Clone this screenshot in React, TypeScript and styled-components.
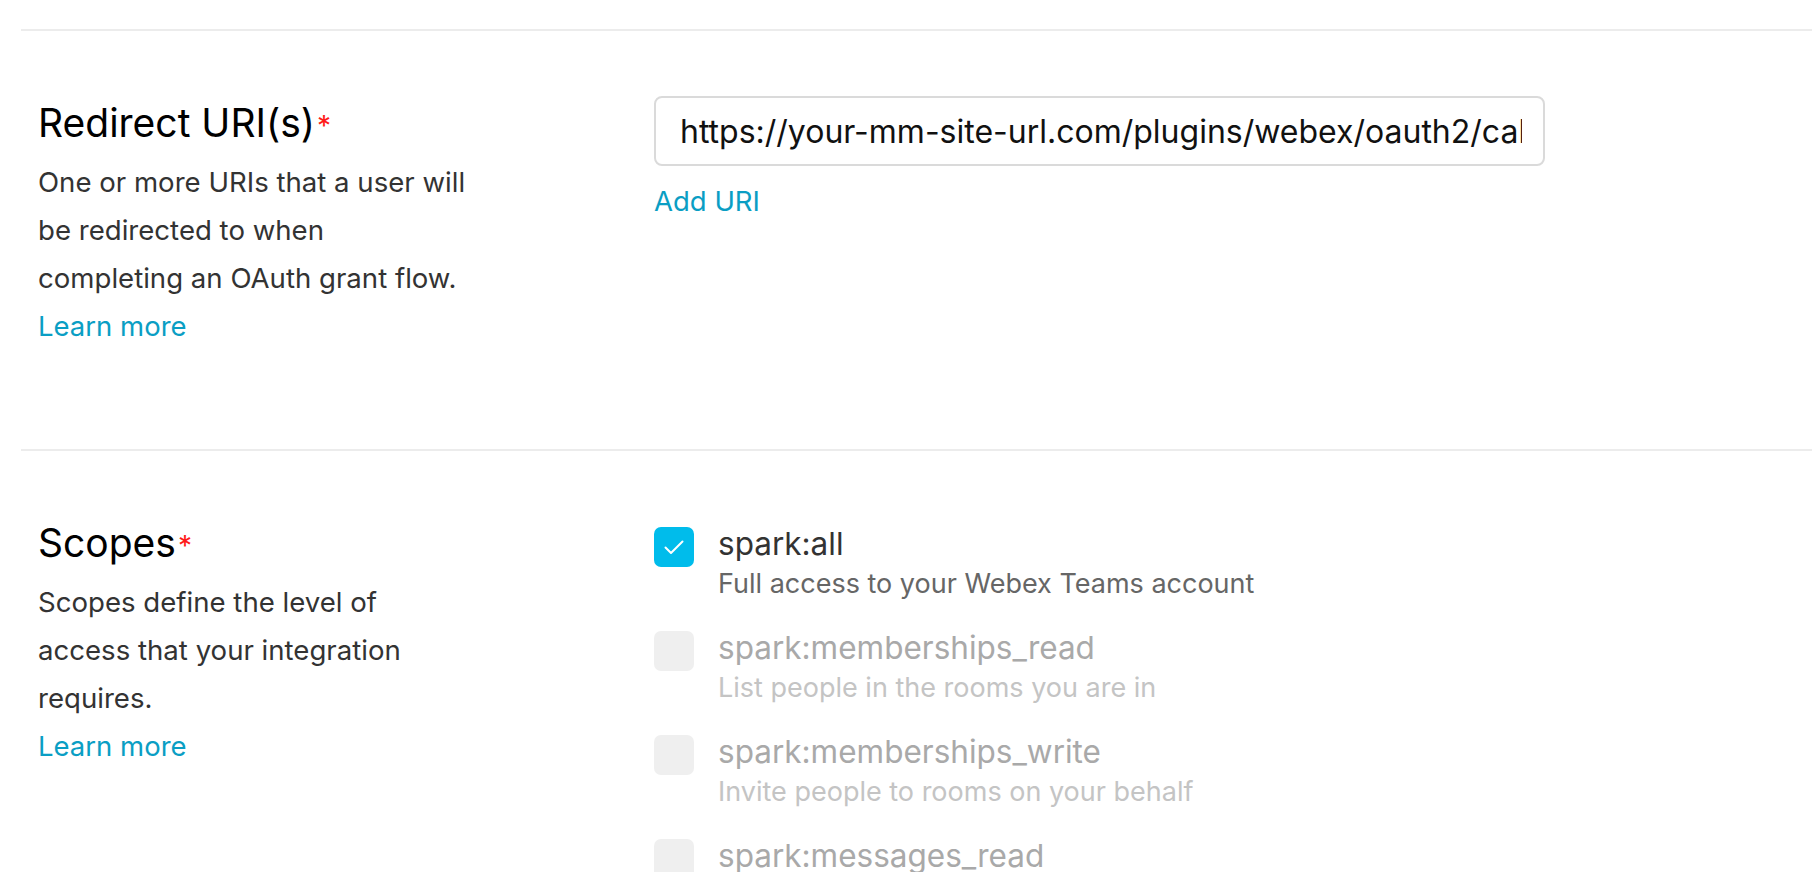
import React from "react";
import styled, { createGlobalStyle } from "styled-components";

const GlobalStyle = createGlobalStyle`
  html, body {
    margin: 0;
    padding: 0;
    background: #ffffff;
    overflow: hidden;
  }
  body {
    font-family: Inter, "Liberation Sans", Arial, sans-serif;
    -webkit-font-smoothing: antialiased;
  }
`;

const Page = styled.main`
  padding: 29px 0 0 21px;
`;

const Section = styled.section`
  border-top: 2px solid #ececec;
  display: grid;
  grid-template-columns: 616px 891px;
  align-items: start;
  padding: 65px 0 99px 17px;
`;

const LeftCol = styled.div`
  padding-top: 3px;
`;

const RightCol = styled.div<{ $offset: number }>`
  padding-top: ${(p) => p.$offset}px;
`;

const Title = styled.h2`
  margin: 0 0 11px;
  font-size: 39px;
  line-height: 48px;
  height: 48px;
  font-weight: 400;
  color: #000000;
`;

const Required = styled.span`
  position: relative;
  top: -1px;
  margin-left: 2px;
  font-size: 28px;
  line-height: 0;
  vertical-align: baseline;
  color: #ff1a1a;
`;

const Desc = styled.p`
  margin: 0;
  font-size: 27.6px;
  line-height: 48px;
  color: #333333;
  white-space: pre-line;
`;

const Link = styled.a`
  display: block;
  font-size: 27.5px;
  line-height: 48px;
  color: #0a9ec4;
  text-decoration: none;
  cursor: pointer;
`;

const AddLink = styled(Link)`
  margin-top: 11px;
`;

const UriInput = styled.input`
  box-sizing: border-box;
  width: 891px;
  height: 70px;
  border: 2px solid #dadada;
  border-radius: 8px;
  padding: 0 21px 0 24px;
  font-family: Inter, "Liberation Sans", Arial, sans-serif;
  font-size: 32px;
  color: #111111;
  background: #ffffff;
  outline: none;
`;

const ScopeList = styled.div`
  display: flex;
  flex-direction: column;
  gap: 24px;
`;

const ScopeRow = styled.label`
  display: flex;
  align-items: flex-start;
  gap: 24px;
`;

const Box = styled.span<{ $checked: boolean }>`
  flex: none;
  width: 40px;
  height: 40px;
  border-radius: 7px;
  background: ${(p) => (p.$checked ? "#00bceb" : "#efefef")};
  display: flex;
  align-items: center;
  justify-content: center;
`;

const ScopeText = styled.div`
  display: flex;
  flex-direction: column;
`;

const ScopeName = styled.span<{ $disabled: boolean }>`
  font-size: 31.5px;
  line-height: 34px;
  color: ${(p) => (p.$disabled ? "#a9a9a9" : "#333333")};
`;

const ScopeDesc = styled.span<{ $disabled: boolean }>`
  font-size: 27px;
  line-height: 46px;
  color: ${(p) => (p.$disabled ? "#c4c4c4" : "#666666")};
`;

const CheckMark = () => (
  <svg width="40" height="40" viewBox="0 0 40 40" fill="none">
    <path
      d="M11.5 20.5 L17 26 L28.5 14.5"
      stroke="#ffffff"
      strokeWidth="2"
      strokeLinecap="round"
      strokeLinejoin="round"
    />
  </svg>
);

type Scope = { name: string; desc: string; checked: boolean };

const scopes: Scope[] = [
  { name: "spark:all", desc: "Full access to your Webex Teams account", checked: true },
  { name: "spark:memberships_read", desc: "List people in the rooms you are in", checked: false },
  { name: "spark:memberships_write", desc: "Invite people to rooms on your behalf", checked: false },
  { name: "spark:messages_read", desc: "Read the content of rooms that you are in", checked: false },
  { name: "spark:messages_write", desc: "Post and delete messages on your behalf", checked: false },
];

export default function App() {
  return (
    <>
      <GlobalStyle />
      <Page>
        <Section>
          <LeftCol>
            <Title>
              Redirect URI(s)<Required>*</Required>
            </Title>
            <Desc>{"One or more URIs that a user will\nbe redirected to when\ncompleting an OAuth grant flow."}</Desc>
            <Link>Learn more</Link>
          </LeftCol>
          <RightCol $offset={0}>
            <UriInput
              type="text"
              defaultValue="https://your-mm-site-url.com/plugins/webex/oauth2/callback"
            />
            <AddLink>Add URI</AddLink>
          </RightCol>
        </Section>
        <Section>
          <LeftCol>
            <Title>
              Scopes<Required>*</Required>
            </Title>
            <Desc>{"Scopes define the level of\naccess that your integration\nrequires."}</Desc>
            <Link>Learn more</Link>
          </LeftCol>
          <RightCol $offset={11}>
            <ScopeList>
              {scopes.map((s) => (
                <ScopeRow key={s.name}>
                  <Box $checked={s.checked}>{s.checked && <CheckMark />}</Box>
                  <ScopeText>
                    <ScopeName $disabled={!s.checked}>{s.name}</ScopeName>
                    <ScopeDesc $disabled={!s.checked}>{s.desc}</ScopeDesc>
                  </ScopeText>
                </ScopeRow>
              ))}
            </ScopeList>
          </RightCol>
        </Section>
      </Page>
    </>
  );
}
